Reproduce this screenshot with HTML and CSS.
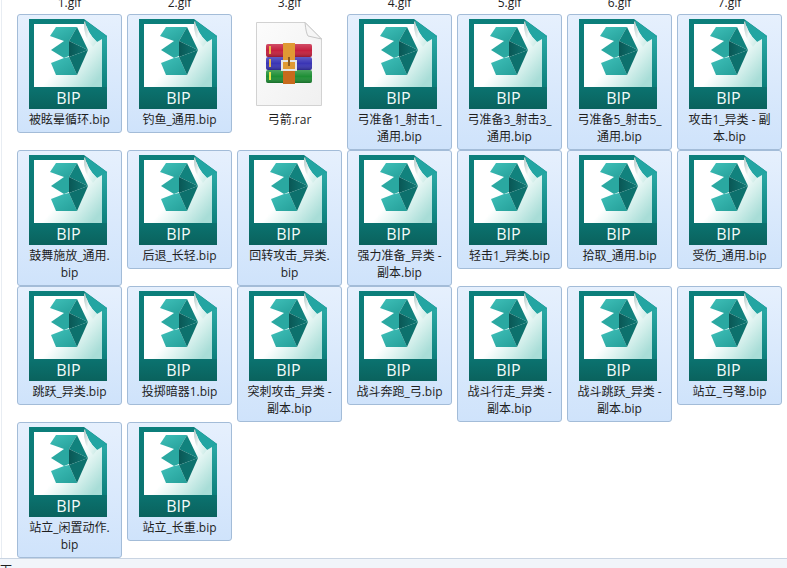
FILE: index.html
```html
<!DOCTYPE html>
<html lang="zh-CN">

<head>
  <meta charset="UTF-8">
  <title>BIP files</title>
  <link rel="stylesheet" href="styles.css">
</head>

<body>
  <svg class="defs" width="0" height="0">
    <defs>
      <linearGradient id="band" x1="0" y1="0" x2="0" y2="1">
        <stop offset="0" stop-color="#0c7f7b" />
        <stop offset="0.75" stop-color="#0b7370" />
        <stop offset="1" stop-color="#0a625d" />
      </linearGradient>
      <linearGradient id="edge" x1="0" y1="0" x2="0" y2="1">
        <stop offset="0" stop-color="#2aaaa6" />
        <stop offset="1" stop-color="#0d7f7b" />
      </linearGradient>
      <linearGradient id="page" x1="0" y1="0" x2="1" y2="0.8">
        <stop offset="0.55" stop-color="#ffffff" />
        <stop offset="0.8" stop-color="#d0eeea" />
        <stop offset="1" stop-color="#a8ddd7" />
      </linearGradient>
      <linearGradient id="curl" x1="0" y1="0" x2="1" y2="0.4">
        <stop offset="0" stop-color="#b4c6c4" />
        <stop offset="0.5" stop-color="#f1f9f8" />
        <stop offset="1" stop-color="#d2eeea" />
      </linearGradient>
      <linearGradient id="arm" x1="0" y1="0" x2="1" y2="1">
        <stop offset="0" stop-color="#3fc0b9" />
        <stop offset="1" stop-color="#259f99" />
      </linearGradient>
      <linearGradient id="core" x1="0" y1="0" x2="1" y2="0">
        <stop offset="0" stop-color="#0a5755" />
        <stop offset="1" stop-color="#0f7a76" />
      </linearGradient>
      <linearGradient id="paper" x1="0" y1="0" x2="1" y2="1">
        <stop offset="0" stop-color="#fcfcfc" />
        <stop offset="1" stop-color="#f0f0f0" />
      </linearGradient>
      <linearGradient id="shade" x1="0" y1="0" x2="0" y2="1">
        <stop offset="0" stop-color="#ffffff" stop-opacity="0.2" />
        <stop offset="0.5" stop-color="#ffffff" stop-opacity="0" />
        <stop offset="1" stop-color="#000000" stop-opacity="0.25" />
      </linearGradient>
      <symbol id="bip" viewBox="0 0 78 90">
        <path d="M0 0H55L78 17V90H0Z" fill="url(#band)" />
        <path d="M73 19L78 17V68H73Z" fill="url(#edge)" />
        <path d="M5 5H55L73 20V68H5Z" fill="url(#page)" />
        <path d="M56 1Q58 14 68 23L78 17Z" fill="#23a5a2" />
        <path d="M55 3Q54 18 64 28L68 23Q58 14 56 2Z" fill="url(#curl)" />
        <path d="M21 17L27 8H48L40 22H35Z" fill="url(#arm)" />
        <path d="M22 31L35 22H40V37L35 39Z" fill="#2aa8a1" />
        <path d="M22 44L35 39L40 38L48 56H27Z" fill="url(#arm)" />
        <path d="M48 8L59 31L40 22Z" fill="#11827d" />
        <path d="M40 22L59 31L40 38Z" fill="url(#core)" />
        <path d="M40 38L59 31L48 56Z" fill="#0d716d" />
        <text class="bip-text" x="39.5" y="85" text-anchor="middle">BIP</text>
      </symbol>
      <symbol id="rar" viewBox="0 0 78 90">
        <path d="M7.5 3.5H56L72.5 20V86.5H7.5Z" fill="url(#paper)" stroke="#d2d2d2" />
        <path d="M56 3.5Q57 14 59 17L72.5 20Z" fill="#f6f6f6" stroke="#c6c6c6" />
        <rect x="17" y="25" width="46" height="13" rx="2" fill="#c5203f" />
        <rect x="17" y="38" width="46" height="13" rx="2" fill="#3a35b5" />
        <rect x="17" y="51" width="46" height="13" rx="2" fill="#1e8f35" />
        <rect x="17" y="25" width="46" height="13" rx="2" fill="url(#shade)" />
        <rect x="17" y="38" width="46" height="13" rx="2" fill="url(#shade)" />
        <rect x="17" y="51" width="46" height="13" rx="2" fill="url(#shade)" />
        <rect x="20" y="27" width="2" height="8" fill="#e9b949" />
        <rect x="20" y="40" width="2" height="8" fill="#e9b949" />
        <rect x="20" y="53" width="2" height="8" fill="#e9e549" />
        <rect x="34" y="24" width="12" height="41" fill="#e09a34" />
        <rect x="34" y="50" width="12" height="15" fill="#c76a1c" />
        <path d="M33 42H47V51H33Z" fill="none" stroke="#e6e6e6" stroke-width="2" />
        <rect x="39" y="38" width="2" height="9" fill="#8a5a20" />
      </symbol>
    </defs>
  </svg>

  <div class="pane">
    <div class="gif-row">
      <span>1.gif</span>
      <span>2.gif</span>
      <span>3.gif</span>
      <span>4.gif</span>
      <span>5.gif</span>
      <span>6.gif</span>
      <span>7.gif</span>
    </div>

    <div class="files">
      <div class="tile"><svg class="icon"><use href="#bip" /></svg><p>被眩晕循环.bip</p></div>
      <div class="tile"><svg class="icon"><use href="#bip" /></svg><p>钓鱼_通用.bip</p></div>
      <div class="tile plain"><svg class="icon"><use href="#rar" /></svg><p>弓箭.rar</p></div>
      <div class="tile"><svg class="icon"><use href="#bip" /></svg><p>弓准备1_射击1_<br>通用.bip</p></div>
      <div class="tile"><svg class="icon"><use href="#bip" /></svg><p>弓准备3_射击3_<br>通用.bip</p></div>
      <div class="tile"><svg class="icon"><use href="#bip" /></svg><p>弓准备5_射击5_<br>通用.bip</p></div>
      <div class="tile"><svg class="icon"><use href="#bip" /></svg><p>攻击1_异类 - 副<br>本.bip</p></div>

      <div class="tile"><svg class="icon"><use href="#bip" /></svg><p>鼓舞施放_通用.<br>bip</p></div>
      <div class="tile"><svg class="icon"><use href="#bip" /></svg><p>后退_长轻.bip</p></div>
      <div class="tile"><svg class="icon"><use href="#bip" /></svg><p>回转攻击_异类.<br>bip</p></div>
      <div class="tile"><svg class="icon"><use href="#bip" /></svg><p>强力准备_异类 -<br>副本.bip</p></div>
      <div class="tile"><svg class="icon"><use href="#bip" /></svg><p>轻击1_异类.bip</p></div>
      <div class="tile"><svg class="icon"><use href="#bip" /></svg><p>拾取_通用.bip</p></div>
      <div class="tile"><svg class="icon"><use href="#bip" /></svg><p>受伤_通用.bip</p></div>

      <div class="tile"><svg class="icon"><use href="#bip" /></svg><p>跳跃_异类.bip</p></div>
      <div class="tile"><svg class="icon"><use href="#bip" /></svg><p>投掷暗器1.bip</p></div>
      <div class="tile"><svg class="icon"><use href="#bip" /></svg><p>突刺攻击_异类 -<br>副本.bip</p></div>
      <div class="tile"><svg class="icon"><use href="#bip" /></svg><p>战斗奔跑_弓.bip</p></div>
      <div class="tile"><svg class="icon"><use href="#bip" /></svg><p>战斗行走_异类 -<br>副本.bip</p></div>
      <div class="tile"><svg class="icon"><use href="#bip" /></svg><p>战斗跳跃_异类 -<br>副本.bip</p></div>
      <div class="tile"><svg class="icon"><use href="#bip" /></svg><p>站立_弓弩.bip</p></div>

      <div class="tile"><svg class="icon"><use href="#bip" /></svg><p>站立_闲置动作.<br>bip</p></div>
      <div class="tile"><svg class="icon"><use href="#bip" /></svg><p>站立_长重.bip</p></div>
    </div>
  </div>

  <div class="status">下</div>
</body>

</html>
```

FILE: styles.css
```css
* {
  box-sizing: border-box;
}

html,
body {
  height: 100%;
}

body {
  margin: 0;
  background-color: #ffffff;
  color: #1e1e1e;
  font-family: "Open Sans", "Noto Sans CJK SC", sans-serif;
  font-size: 12px;
  line-height: 17px;
  display: flex;
  flex-direction: column;
  overflow: hidden;
}

.defs {
  position: absolute;
}

.pane {
  height: 558px;
  flex-shrink: 0;
  margin-left: 1px;
  border-left: 1px solid #e8edf3;
  padding-left: 15px;
  overflow: hidden;
}

.gif-row,
.files {
  display: grid;
  grid-template-columns: repeat(7, 105px);
  column-gap: 5px;
}

.gif-row {
  margin-top: -6px;
  margin-bottom: 3px;
  text-align: center;
}

.files {
  row-gap: 1px;
  grid-auto-rows: 135px;
  align-items: start;
}

.tile {
  border: 1px solid #a3bcd8;
  border-radius: 3px;
  background: linear-gradient(to bottom, #e6f0fd, #cfe3fb);
  padding-top: 4px;
  text-align: center;
}

.tile.plain {
  border-color: transparent;
  background: none;
}

.tile p {
  margin: 2px 0 4px;
}

.icon {
  display: block;
  width: 78px;
  height: 90px;
  margin-left: 11px;
}

.bip-text {
  fill: #f4fbfa;
  font-family: "Open Sans", sans-serif;
  font-size: 16px;
}

.status {
  flex: 1;
  border-top: 1px solid #c9d4e2;
  background-color: #f1f5fa;
  padding-top: 3px;
}
```
